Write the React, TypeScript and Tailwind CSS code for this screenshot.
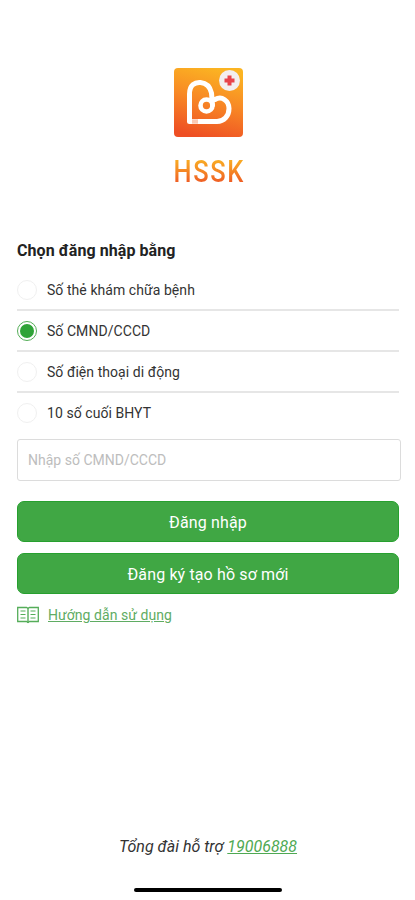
import { clsx } from "clsx"

const options = [
  { id: "card", label: "Số thẻ khám chữa bệnh" },
  { id: "cmnd", label: "Số CMND/CCCD" },
  { id: "phone", label: "Số điện thoại di động" },
  { id: "bhyt", label: "10 số cuối BHYT" },
]

function Logo() {
  return (
    <svg className="h-[69px] w-[69px]" viewBox="0 0 69 69" fill="none">
      <defs>
        <linearGradient id="bg" x1="0.6" y1="0" x2="0.35" y2="1">
          <stop offset="0" stopColor="#fbb422" />
          <stop offset="0.45" stopColor="#f88a25" />
          <stop offset="1" stopColor="#ee4f24" />
        </linearGradient>
      </defs>
      <rect width="69" height="69" rx="4" fill="url(#bg)" />
      <path
        d="M41 31.500 C48 27.500 55 33 55 40.500 C55 48 50 53.500 43 53.500 H15.500 V26 C15.500 17 21 14 26.500 14.500 C32 15 36 18.500 37.500 25 L38.500 37"
        stroke="#fff"
        strokeWidth="5"
        strokeLinecap="round"
        strokeLinejoin="round"
      />
      <circle cx="32.500" cy="37.500" r="6" stroke="#fff" strokeWidth="4.600" />
      <path d="M18 53.500H24" stroke="#fbc9b4" strokeWidth="4.400" />
      <circle cx="55.500" cy="12.500" r="10.500" fill="#f3eeee" />
      <path d="M55.500 7.500v10M50.500 12.500h10" stroke="#e8434a" strokeWidth="4" />
    </svg>
  )
}

function BookIcon() {
  return (
    <svg className="h-[18px] w-[22px]" viewBox="0 0 22 18" fill="none" stroke="#55ad59">
      <path d="M0.700 1.500H9.500L11 2.300L12.500 1.500H21.300V15.500H12.500L11 16.500L9.500 15.500H0.700Z" strokeWidth="1.300" />
      <path d="M11 2v15" strokeWidth="1.400" />
      <path d="M3.500 5h5M3.500 8.500h5M3.500 12h5M13.500 5h5M13.500 8.500h5M13.500 12h5" strokeWidth="1.200" />
    </svg>
  )
}

export default function App() {
  const selected = "cmnd"

  return (
    <div className="flex h-[900px] w-full flex-col overflow-hidden bg-white pl-[17px] pr-4 pt-[68px] font-['Roboto',sans-serif] text-[#333]">
      <header className="flex h-[171px] flex-col items-center">
        <Logo />
        <h1 className="mt-[17px] scale-x-[0.82] bg-gradient-to-b from-[#f8a823] from-20% to-[#ee5a24] to-80% bg-clip-text pl-[3px] text-[31px] font-medium leading-[36px] tracking-[2px] text-transparent">
          HSSK
        </h1>
      </header>

      <h2 className="h-[31px] text-[16px] font-bold leading-[24px] tracking-[0.06px] text-[#222]">
        Chọn đăng nhập bằng
      </h2>

      <div className="flex flex-col">
        {options.map((option) => (
          <label
            key={option.id}
            className="flex h-[41px] items-center border-b-2 border-[#e6e6e6] last:border-transparent"
          >
            <span
              className={clsx(
                "flex size-5 items-center justify-center rounded-full border",
                option.id === selected ? "border-[#55ae58]" : "border-[#f0f0f0]"
              )}
            >
              {option.id === selected && <span className="size-[14px] rounded-full bg-[#2fa338]" />}
            </span>
            <span className="ml-[10px] pt-px text-[14px] tracking-[0.06px]">{option.label}</span>
          </label>
        ))}
      </div>

      <input
        className="mt-[5px] h-[42px] w-[384px] shrink-0 rounded-[3px] border border-[#dcdcdc] px-[10px] text-[14px] tracking-[0.01px] placeholder:text-[#bdbdbd]"
        placeholder="Nhập số CMND/CCCD"
      />

      <button className="mt-5 h-[41px] shrink-0 rounded-[7px] border border-[#27a02f] bg-[#40a744] pt-0.5 text-[16px] tracking-[0.15px] text-white">
        Đăng nhập
      </button>
      <button className="mt-[11px] h-[41px] shrink-0 rounded-[7px] border border-[#27a02f] bg-[#40a744] pt-0.5 text-[16px] tracking-[0.13px] text-white">
        Đăng ký tạo hồ sơ mới
      </button>

      <a href="#" className="mt-[11px] flex items-center text-[14px] leading-5 tracking-[0.05px] text-[#5fac63]">
        <BookIcon />
        <span className="ml-[9px] underline">Hướng dẫn sử dụng</span>
      </a>

      <footer className="mt-auto flex flex-col items-center pb-2">
        <p className="text-[16px] italic leading-6">
          Tổng đài hỗ trợ{" "}
          <a href="tel:19006888" className="text-[#4fa953] underline">
            19006888
          </a>
        </p>
        <div className="mt-[29px] h-1 w-[148px] rounded-full bg-black" />
      </footer>
    </div>
  )
}
